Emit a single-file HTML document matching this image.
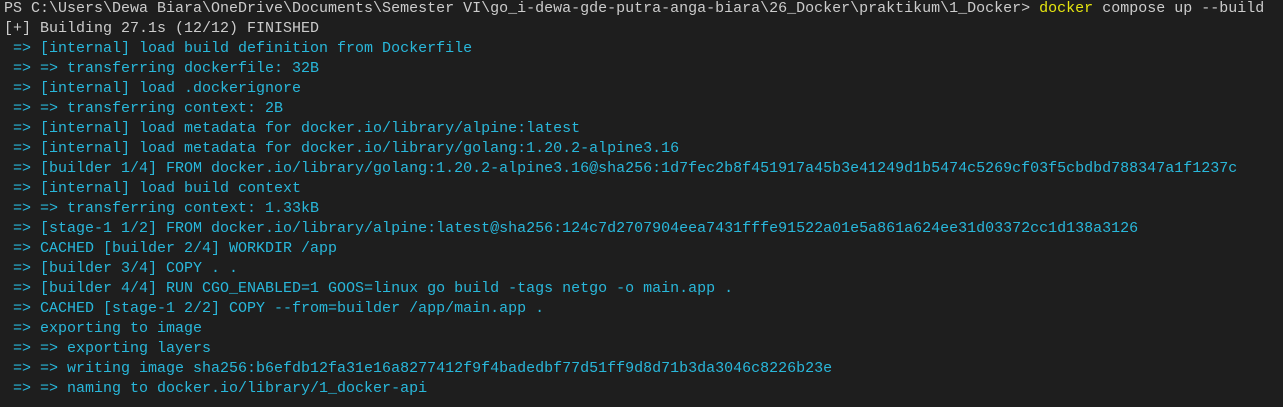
<!DOCTYPE html>
<html><head><style>
html,body{margin:0;padding:0;background:#1e1e1e;width:1283px;height:407px;overflow:hidden}
pre{margin:-1px 0 0 0;padding:0 0 0 4px;font-family:"Liberation Mono",monospace;font-size:15px;line-height:20px;color:#cccccc;white-space:pre}
.b{color:#29b8db}.y{color:#e5e510}
</style></head><body><pre>PS C:\Users\Dewa Biara\OneDrive\Documents\Semester VI\go_i-dewa-gde-putra-anga-biara\26_Docker\praktikum\1_Docker&gt; <span class="y">docker</span> compose up --build
[+] Building 27.1s (12/12) FINISHED
<span class="b"> =&gt; [internal] load build definition from Dockerfile
 =&gt; =&gt; transferring dockerfile: 32B
 =&gt; [internal] load .dockerignore
 =&gt; =&gt; transferring context: 2B
 =&gt; [internal] load metadata for docker.io/library/alpine:latest
 =&gt; [internal] load metadata for docker.io/library/golang:1.20.2-alpine3.16
 =&gt; [builder 1/4] FROM docker.io/library/golang:1.20.2-alpine3.16@sha256:1d7fec2b8f451917a45b3e41249d1b5474c5269cf03f5cbdbd788347a1f1237c
 =&gt; [internal] load build context
 =&gt; =&gt; transferring context: 1.33kB
 =&gt; [stage-1 1/2] FROM docker.io/library/alpine:latest@sha256:124c7d2707904eea7431fffe91522a01e5a861a624ee31d03372cc1d138a3126
 =&gt; CACHED [builder 2/4] WORKDIR /app
 =&gt; [builder 3/4] COPY . .
 =&gt; [builder 4/4] RUN CGO_ENABLED=1 GOOS=linux go build -tags netgo -o main.app .
 =&gt; CACHED [stage-1 2/2] COPY --from=builder /app/main.app .
 =&gt; exporting to image
 =&gt; =&gt; exporting layers
 =&gt; =&gt; writing image sha256:b6efdb12fa31e16a8277412f9f4badedbf77d51ff9d8d71b3da3046c8226b23e
 =&gt; =&gt; naming to docker.io/library/1_docker-api</span></pre></body></html>
